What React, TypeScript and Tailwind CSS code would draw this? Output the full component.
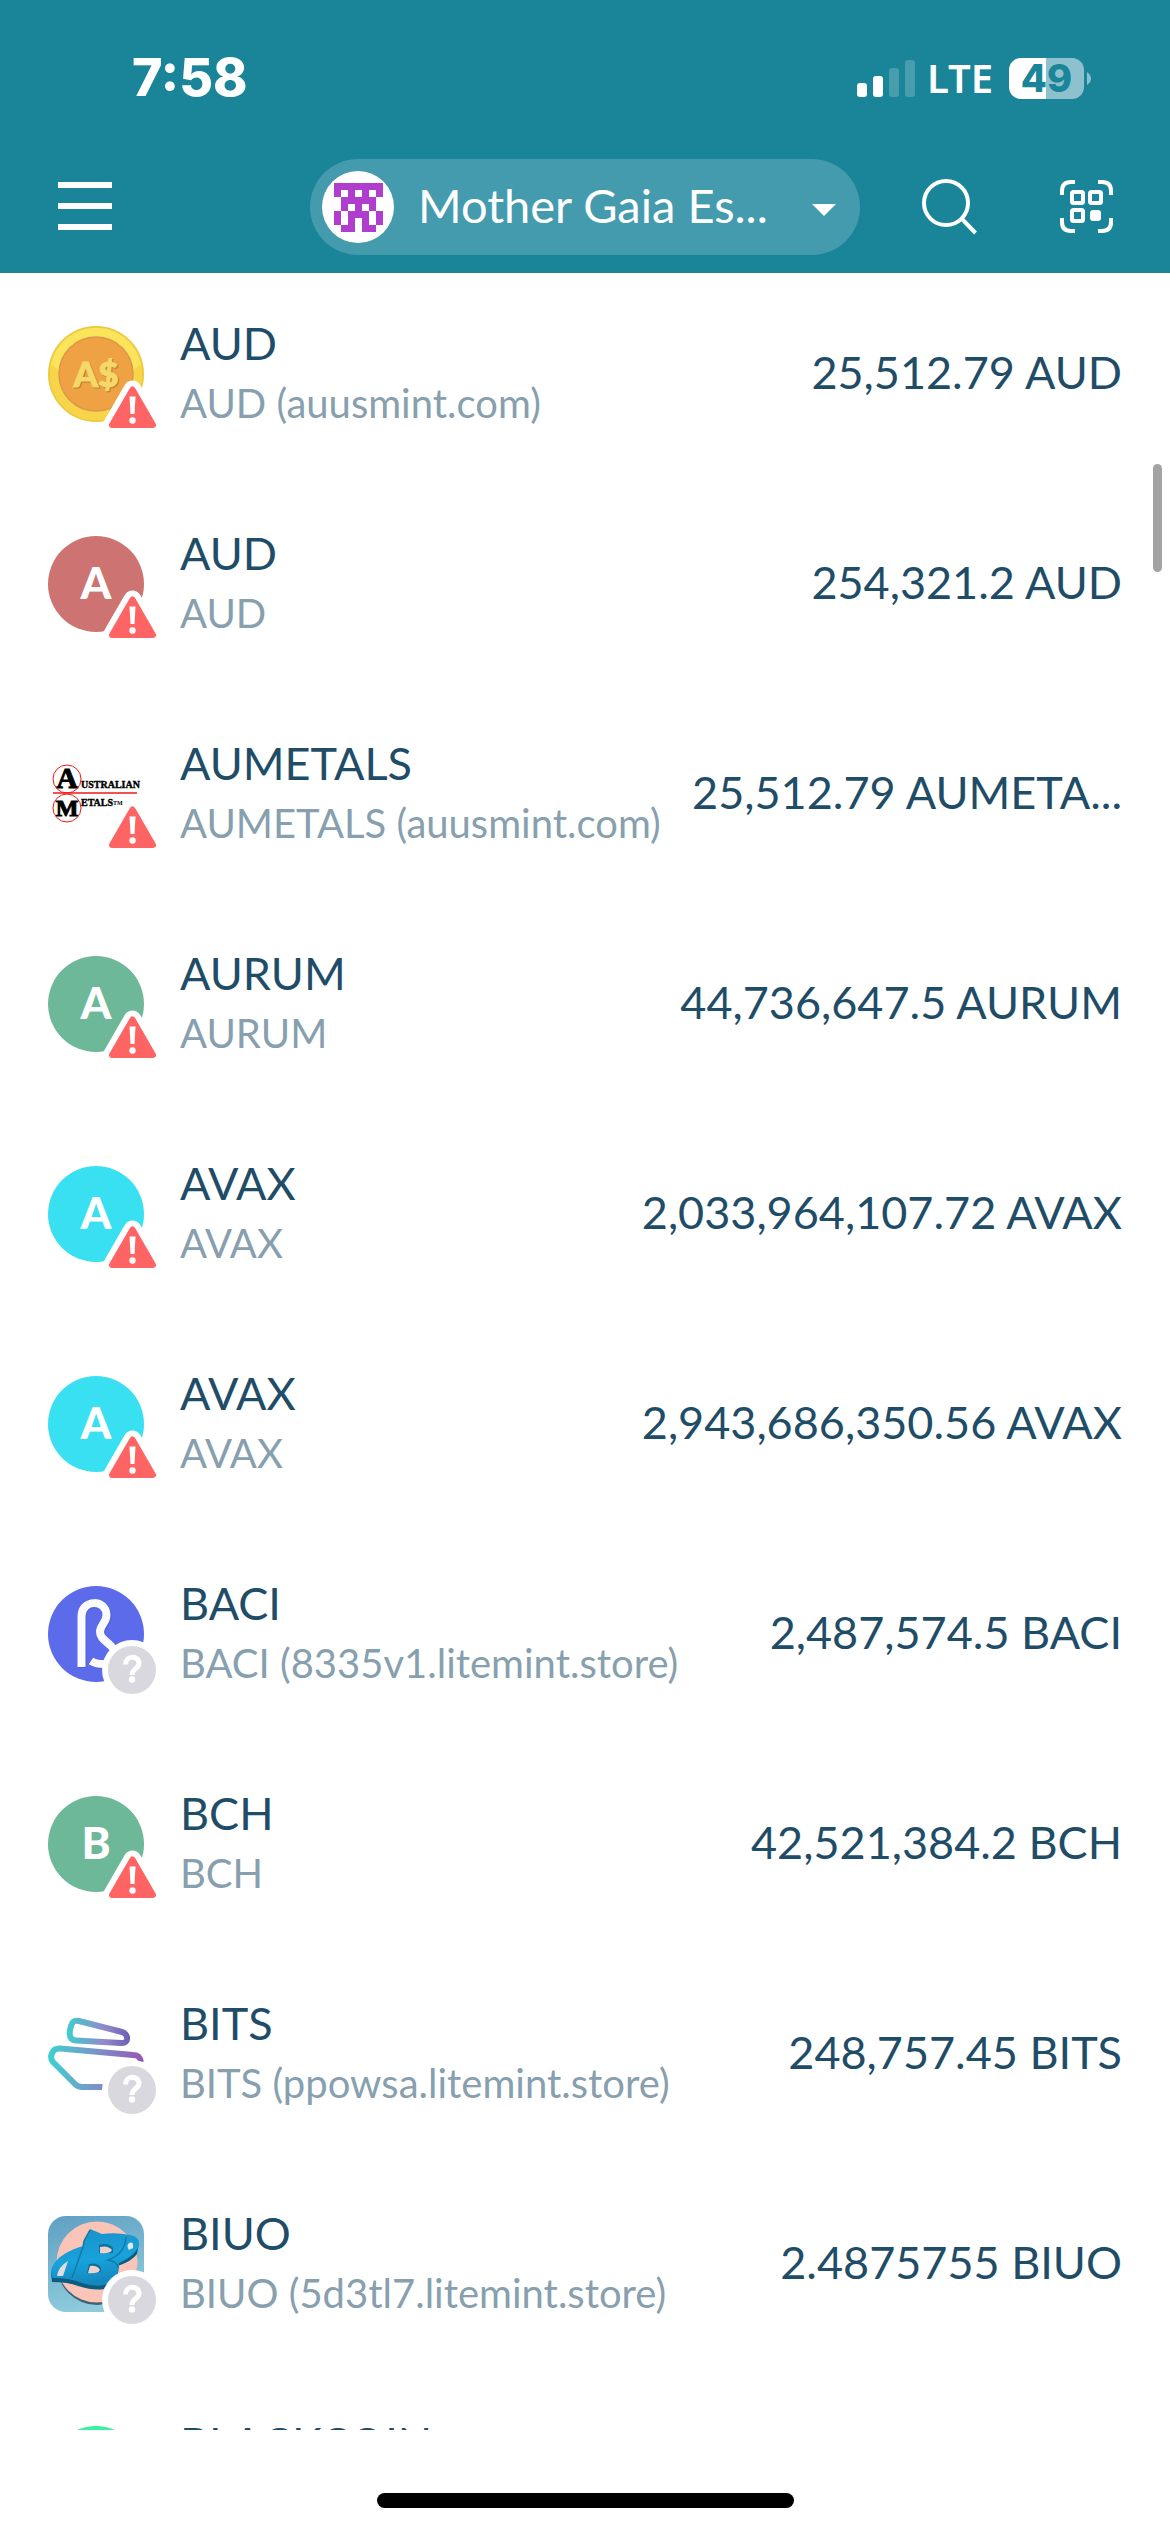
import React from "react";

type Badge = "warning" | "unknown";

type Asset = {
  name: string;
  issuer: string;
  amount: string;
  badge: Badge;
  icon: React.ReactNode;
};

function LetterIcon({ letter, tone }: { letter: string; tone: string }) {
  return (
    <div
      className={`flex size-24 items-center justify-center rounded-full pb-1 text-[44px] font-black leading-none text-white ${tone}`}
    >
      {letter}
    </div>
  );
}

function CoinIcon() {
  return (
    <svg viewBox="0 0 96 96" className="size-24" aria-hidden="true">
      <circle cx="48" cy="48" r="48" fill="#f8d548" />
      <path d="M3 38A46 46 0 0 1 93 38L80 48H16Z" fill="#f9e45c" />
      <circle cx="48" cy="48" r="47" fill="none" stroke="#ecc944" strokeWidth="1.5" />
      <circle cx="48" cy="48" r="37" fill="#eea243" stroke="#dc9650" strokeWidth="1.5" />
      <g fontFamily="Lato, sans-serif" fontWeight="900" fontSize="35" textAnchor="middle">
        <text x="49" y="62" fill="#bd7a33" stroke="#bd7a33">A$</text>
        <text x="48" y="61" fill="#f5d967" stroke="#f5d967">A$</text>
      </g>
    </svg>
  );
}

function AustralianMetalsIcon() {
  return (
    <svg viewBox="0 0 96 96" className="size-24" aria-hidden="true">
      <g fontFamily="Liberation Serif, serif" fontWeight="700" fill="#000" stroke="#000">
        <text x="19" y="42" fontSize="30" textAnchor="middle" strokeWidth="1">A</text>
        <text x="19" y="70" fontSize="24" textAnchor="middle" strokeWidth="1">M</text>
        <text x="33" y="42" fontSize="10" strokeWidth="0.4">USTRALIAN</text>
        <text x="33" y="60" fontSize="10" strokeWidth="0.4">ETALS</text>
        <text x="65" y="59" fontSize="6" strokeWidth="0">TM</text>
      </g>
      <g fill="none" stroke="#f01818">
        <circle cx="19" cy="33" r="14" strokeWidth="1" />
        <circle cx="19" cy="62" r="14" strokeWidth="1" />
        <path d="M5 47H89" strokeWidth="1.6" />
      </g>
    </svg>
  );
}

function BaciIcon() {
  return (
    <svg viewBox="0 0 96 96" className="size-24" aria-hidden="true">
      <circle cx="48" cy="48" r="48" fill="#5b6bea" />
      <g fill="none" strokeWidth="8">
        <path
          d="M34.500 82V30C34.500 14 59.500 14 59.500 30C59.500 38 53 40 53 47C53 53 59 56 64 61C71 68 66 79 56 79C51 79 47 78 44 76"
          stroke="#4353c4"
          opacity="0.5"
        />
        <path
          d="M33.500 81V30C33.500 13 58.500 13 58.500 29C58.500 37 52 39 52 46C52 52 58 55 63 60C70 67 65 78 55 78C50 78 46 77 43 75"
          stroke="#fafaff"
        />
      </g>
    </svg>
  );
}

function BitsIcon() {
  return (
    <svg viewBox="0 0 96 96" className="size-24" aria-hidden="true">
      <defs>
        <linearGradient id="bitsTop" x1="20" y1="0" x2="82" y2="0" gradientUnits="userSpaceOnUse">
          <stop offset="0" stopColor="#42cccc" />
          <stop offset="0.6" stopColor="#9387cc" />
          <stop offset="1" stopColor="#6a5eb4" />
        </linearGradient>
        <linearGradient id="bitsBottom" x1="2" y1="0" x2="94" y2="0" gradientUnits="userSpaceOnUse">
          <stop offset="0" stopColor="#3fcfd0" />
          <stop offset="0.5" stopColor="#7b94c8" />
          <stop offset="1" stopColor="#9657b4" />
        </linearGradient>
      </defs>
      <g fill="none" strokeWidth="6" strokeLinejoin="round">
        <path
          d="M31 15L74 26C81 28 81 38 73 37L28 34.500C19 34 22 23 23 20C24.500 15 27 14 31 15Z"
          stroke="url(#bitsTop)"
        />
        <path
          d="M93 56C92 51 90 49 85 49L12 42.500C4 42 1 51 5 56L27 78Q30 81 34 81H72"
          stroke="url(#bitsBottom)"
        />
      </g>
    </svg>
  );
}

function BiuoIcon() {
  return (
    <svg viewBox="0 0 96 96" className="size-24 rounded-[18px]" aria-hidden="true">
      <defs>
        <linearGradient id="biuoSky" x1="0" y1="0" x2="0.300" y2="1">
          <stop offset="0" stopColor="#5f9fc2" />
          <stop offset="1" stopColor="#8ecbdd" />
        </linearGradient>
        <linearGradient id="biuoLetter" x1="0" y1="0" x2="0.200" y2="1">
          <stop offset="0" stopColor="#1b8fc6" />
          <stop offset="0.600" stopColor="#18a2dc" />
          <stop offset="1" stopColor="#1488bd" />
        </linearGradient>
      </defs>
      <rect width="96" height="96" fill="url(#biuoSky)" />
      <circle cx="49" cy="49" r="40" fill="#40606e" />
      <circle cx="49" cy="46" r="40.500" fill="#fbc4b8" />
      <path
        d="M3 56L4 66Q20 66 30 70Q46 75 56 73Q68 68 70 58V50Q84 45 89 38L91 27L70 44L30 60Z"
        fill="#0d5c80"
      />
      <path
        d="M42 13L54 18Q68 16 82 19Q92 21 91 28Q89 39 71 47Q72 62 60 68Q50 72 34 67Q22 62 5 62Q1 57 5 49Q12 37 35 30L36 24Z"
        fill="url(#biuoLetter)"
      />
      <path
        d="M42 14L36 25L35 31L24 62M78 21Q77 38 60 44Q70 46 70 52"
        fill="none"
        stroke="#117aa8"
        strokeWidth="1.5"
      />
      <path d="M51 29Q60 26 65 32V37L51 37Z" fill="#0f6f9c" />
      <path d="M52 31Q60 29 64 34Q62 38 52 37Z" fill="#f0d0cc" />
      <path d="M41 48Q50 46 53 52V56L39 57Z" fill="#0f6f9c" />
      <path d="M42 50Q49 49 52 54Q50 58 40 57Z" fill="#f0d0cc" />
      <path d="M81 27Q86 25 85 32L81 34Q78 30 81 27Z" fill="#dceaf0" />
      <path d="M9 60Q10 51 20 45Q17 54 15 60Z" fill="#e2dcde" />
    </svg>
  );
}

function WarningBadge() {
  return (
    <svg viewBox="0 0 60 60" className="absolute left-[54px] top-[54px] size-[60px]" role="img" aria-label="Warning">
      <path d="M30.500 9.500L51 45H10Z" fill="#fff" stroke="#fff" strokeWidth="18" strokeLinejoin="round" />
      <path d="M30.500 9.500L51 45H10Z" fill="#ff6464" stroke="#ff6464" strokeWidth="6" strokeLinejoin="round" />
      <path d="M27.500 16.500H33.500L32.500 34H28.500Z" fill="#fff" />
      <circle cx="30.500" cy="40.500" r="3.200" fill="#fff" />
    </svg>
  );
}

function UnknownBadge() {
  return (
    <svg viewBox="0 0 60 60" className="absolute left-[54px] top-[54px] size-[60px]" role="img" aria-label="Unknown">
      <circle cx="30" cy="30" r="30" fill="#fff" />
      <circle cx="30" cy="30" r="24" fill="#d8d8de" />
      <path
        d="M23.500 24.500C23.500 15 37 15 37 23.500C37 28.500 30 28.500 30 35"
        fill="none"
        stroke="#fff"
        strokeWidth="5"
      />
      <circle cx="30" cy="39.500" r="3.200" fill="#fff" />
    </svg>
  );
}

const assets: Asset[] = [
  { name: "AUD", issuer: "AUD (auusmint.com)", amount: "25,512.79 AUD", badge: "warning", icon: <CoinIcon /> },
  { name: "AUD", issuer: "AUD", amount: "254,321.2 AUD", badge: "warning", icon: <LetterIcon letter="A" tone="bg-[#cd7371]" /> },
  { name: "AUMETALS", issuer: "AUMETALS (auusmint.com)", amount: "25,512.79 AUMETA...", badge: "warning", icon: <AustralianMetalsIcon /> },
  { name: "AURUM", issuer: "AURUM", amount: "44,736,647.5 AURUM", badge: "warning", icon: <LetterIcon letter="A" tone="bg-[#6cb898]" /> },
  { name: "AVAX", issuer: "AVAX", amount: "2,033,964,107.72 AVAX", badge: "warning", icon: <LetterIcon letter="A" tone="bg-[#38e0f2]" /> },
  { name: "AVAX", issuer: "AVAX", amount: "2,943,686,350.56 AVAX", badge: "warning", icon: <LetterIcon letter="A" tone="bg-[#38e0f2]" /> },
  { name: "BACI", issuer: "BACI (8335v1.litemint.store)", amount: "2,487,574.5 BACI", badge: "unknown", icon: <BaciIcon /> },
  { name: "BCH", issuer: "BCH", amount: "42,521,384.2 BCH", badge: "warning", icon: <LetterIcon letter="B" tone="bg-[#6cb898]" /> },
  { name: "BITS", issuer: "BITS (ppowsa.litemint.store)", amount: "248,757.45 BITS", badge: "unknown", icon: <BitsIcon /> },
  { name: "BIUO", issuer: "BIUO (5d3tl7.litemint.store)", amount: "2.4875755 BIUO", badge: "unknown", icon: <BiuoIcon /> },
  { name: "BLACKCOIN", issuer: "", amount: "", badge: "warning", icon: <LetterIcon letter="" tone="bg-[#38f2a0]" /> },
];

const identicon = ["1111111", "1010101", "0111110", "0101010", "1011101", "1010101", "0110110"];

function StatusBar() {
  return (
    <div className="flex h-[156px] items-center justify-between pl-[132px] pr-[79px]">
      <time className="font-[Inter,sans-serif] text-[52px] font-extrabold leading-none">7:58</time>
      <div className="flex items-center">
        <svg width="58" height="37" viewBox="0 0 58 37" fill="#fff" role="img" aria-label="Signal, 2 of 4 bars">
          <rect x="0" y="23" width="10" height="14" rx="3" />
          <rect x="16" y="16" width="10" height="21" rx="3" />
          <rect x="32" y="8" width="10" height="29" rx="3" opacity="0.2" />
          <rect x="48" y="0" width="10" height="37" rx="3" opacity="0.2" />
        </svg>
        <span className="ml-3 font-[Noto_Sans,sans-serif] text-[40px] font-semibold leading-none">LTE</span>
        <div className="ml-4 flex h-[41px] w-[75px] items-center justify-center rounded-xl bg-[linear-gradient(90deg,#fff_50%,#8cc1cd_50%)] font-[Inter,sans-serif] text-[38px] font-extrabold leading-none text-[#1a8499]">
          49
        </div>
        <svg width="4" height="13" viewBox="0 0 4 13" className="ml-[3px]" aria-hidden="true">
          <path d="M0 0Q4 3 4 6.500Q4 10 0 13Z" fill="#8cc1cd" />
        </svg>
      </div>
    </div>
  );
}

function Toolbar() {
  return (
    <nav className="flex h-24 items-center pl-[58px] pr-[56px]">
      <button type="button" aria-label="Menu">
        <svg width="54" height="50" viewBox="0 0 54 50" stroke="#fff" strokeWidth="6" aria-hidden="true">
          <path d="M0 3H54M0 24H54M0 45H54" />
        </svg>
      </button>
      <button
        type="button"
        className="ml-[198px] flex h-full min-w-0 flex-1 items-center rounded-full bg-[#459bae] pl-3 pr-6"
      >
        <span className="flex size-[72px] shrink-0 items-center justify-center rounded-full bg-white">
          <svg width="49" height="49" viewBox="0 0 7 7" fill="#b13dce" shapeRendering="crispEdges" aria-hidden="true">
            {identicon.map((row, y) =>
              [...row].map((cell, x) => (cell === "1" ? <rect key={`${x}-${y}`} x={x} y={y} width="1" height="1" /> : null)),
            )}
          </svg>
        </span>
        <span className="ml-6 truncate pb-1 text-[47px] leading-[60px]">Mother Gaia Es...</span>
        <svg width="24" height="18" viewBox="0 0 24 18" className="ml-auto shrink-0" aria-hidden="true">
          <path d="M0 6H24L12 18Z" fill="#fff" />
        </svg>
      </button>
      <button type="button" aria-label="Search" className="ml-[62px]">
        <svg width="56" height="56" viewBox="0 0 56 56" fill="none" stroke="#fff" strokeWidth="4" aria-hidden="true">
          <circle cx="24" cy="24" r="22" />
          <path d="M39 39L53.500 54" />
        </svg>
      </button>
      <button type="button" aria-label="Scan QR code" className="ml-[82px]">
        <svg width="54" height="54" viewBox="0 0 54 54" fill="none" stroke="#fff" strokeWidth="4" aria-hidden="true">
          <path d="M2 15V11Q2 2 11 2H15M38 2H42Q51 2 51 11V15M51 38V42Q51 51 42 51H38M15 51H11Q2 51 2 42V38" />
          <rect x="12" y="12" width="11" height="11" rx="1.500" />
          <rect x="30" y="12" width="11" height="11" rx="1.500" />
          <rect x="12" y="30" width="11" height="11" rx="1.500" />
          <rect x="30" y="30" width="11" height="11" rx="3" fill="#fff" stroke="none" />
        </svg>
      </button>
    </nav>
  );
}

function AssetRow({ asset }: { asset: Asset }) {
  return (
    <li className="flex h-24 shrink-0 items-center">
      <div className="relative size-24 shrink-0">
        {asset.icon}
        {asset.badge === "warning" ? <WarningBadge /> : <UnknownBadge />}
      </div>
      <div className="ml-9 h-[122px] shrink-0 leading-[60px]">
        <p className="text-[45px] text-[#1f4d68]">{asset.name}</p>
        <p className="text-[40px] text-[#879fae]">{asset.issuer}</p>
      </div>
      <p className="ml-4 min-w-0 flex-1 truncate pb-1 text-right text-[45px] leading-[60px] text-[#1f4d68]">
        {asset.amount}
      </p>
    </li>
  );
}

export default function App() {
  return (
    <div className="flex h-screen flex-col bg-white font-[Lato,sans-serif]">
      <header className="flex shrink-0 flex-col gap-[3px] bg-[#1a8499] pb-[18px] text-white">
        <StatusBar />
        <Toolbar />
      </header>
      <main className="relative min-h-0 flex-1 overflow-hidden">
        <ul className="flex flex-col gap-[114px] px-12 pt-[53px]">
          {assets.map((asset, i) => (
            <AssetRow key={i} asset={asset} />
          ))}
        </ul>
        <div className="absolute right-[8px] top-[191px] h-[108px] w-[9px] rounded-full bg-[#a3a3a3]" />
      </main>
      <footer className="flex h-[102px] shrink-0 items-end justify-center pb-6">
        <div className="h-[15px] w-[417px] rounded-full bg-black" />
      </footer>
    </div>
  );
}
